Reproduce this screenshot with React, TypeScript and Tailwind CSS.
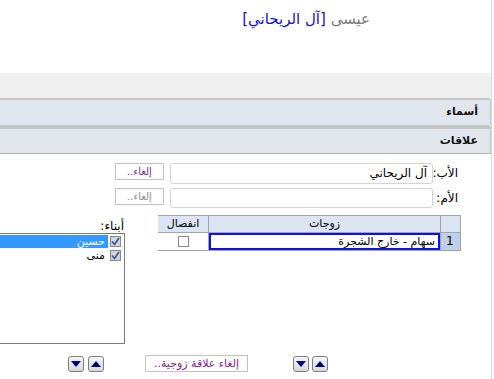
import React from "react";

const font = { fontFamily: '"DejaVu Sans", Tahoma, sans-serif' };

function Arrow({ up }: { up?: boolean }) {
  return (
    <div className="w-[16px] h-[16px] border border-[#7f7f7f] rounded-[3px] bg-gradient-to-b from-[#f6f6f8] to-[#d6d8de] flex items-center justify-center">
      <svg width="10" height="6" viewBox="0 0 10 6">
        {up ? <polygon points="5,0 10,6 0,6" fill="#000080" /> : <polygon points="0,0 10,0 5,6" fill="#000080" />}
      </svg>
    </div>
  );
}

function Check() {
  return (
    <div className="w-[11px] h-[11px] border border-[#8a8a8a] bg-[#cfd3da] flex items-center justify-center shrink-0">
      <svg width="9" height="9" viewBox="0 0 9 9">
        <path d="M1 4.5 L3.5 7.5 L8 1" stroke="#3a4fa0" strokeWidth="1.6" fill="none" />
      </svg>
    </div>
  );
}

export default function App() {
  return (
    <div className="w-[494px] h-[379px] bg-white overflow-hidden" style={font}>
      <div dir="rtl" className="w-[492px] h-[379px] border-r border-[#dcdcdc] flex flex-col">
        {/* title */}
        <div className="h-[73px] pt-[9px] pr-[121px] text-[15px] leading-[20px]">
          <span className="text-[#7a7a7a]">عيسى</span>{" "}
          <span className="text-[#1414cc]">[آل الريحاني]</span>
        </div>
        <div className="h-[25px] bg-[#efefef]" />
        <div className="h-[27px] border-t-2 border-[#c4c4c4] bg-[#e1e5ee] border-r border-r-[#c4c4c4] rounded-tr-[3px] flex items-center pr-[12px] text-[11px] font-bold text-[#111]">
          أسماء
        </div>
        <div className="h-[29px] border-t-4 border-[#c4c4c4] border-b border-b-[#b4b4b4] bg-[#e1e5ee] border-r border-r-[#c4c4c4] rounded-tr-[3px] flex items-center pr-[12px] text-[11px] font-bold text-[#111]">
          علاقات
        </div>

        {/* form */}
        <div className="pt-[9px] pr-[33px] flex flex-col gap-[4px]">
          <div className="flex items-start h-[21px]">
            <div className="w-[25px] text-[12px] leading-[21px] text-black">الأب:</div>
            <div className="w-[263px] h-[21px] border border-[#d4d4d4] rounded-[3px] pr-[5px] text-[12px] leading-[19px] text-black">آل الريحاني</div>
            <div className="mr-[6px] w-[49px] h-[17px] border border-[#c4c4c4] text-[10px] leading-[15px] text-center text-[#8a1a9a]">إلغاء..</div>
          </div>
          <div className="flex items-start h-[20px]">
            <div className="w-[25px] text-[12px] leading-[20px] text-black">الأم:</div>
            <div className="w-[263px] h-[20px] border border-[#d4d4d4] rounded-[3px]" />
            <div className="mr-[6px] w-[49px] h-[17px] border border-[#c4c4c4] text-[10px] leading-[15px] text-center text-[#8c8c8c]">إلغاء..</div>
          </div>
        </div>

        {/* table + children list */}
        <div className="mt-[5px] pr-[30px] flex items-start gap-[33px]">
          <div className="mt-[2px] w-[303px] bg-[#a4a4a4] p-px grid grid-cols-[19px_231px_50px] gap-px">
            <div className="h-[16px] bg-[#dbe4f3]" />
            <div className="h-[16px] bg-[#dbe4f3] text-[11px] leading-[16px] text-center text-black">زوجات</div>
            <div className="h-[16px] bg-[#dbe4f3] text-[11px] leading-[16px] text-center text-black">انفصال</div>
            <div className="h-[17px] bg-[#bdcfe9] text-[12px] leading-[17px] text-left pl-[5px]">1</div>
            <div className="h-[17px] bg-white border-2 border-[#1010e0] pr-[3px] text-[11px] leading-[13px] text-black">سهام - خارج الشجرة</div>
            <div className="h-[17px] bg-white flex items-center justify-center">
              <div className="w-[11px] h-[11px] border border-[#8a8a8a] bg-white" />
            </div>
          </div>
          <div className="w-[125px] flex flex-col">
            <div className="h-[20px] pr-[1px] text-[12px] leading-[26px] text-black">أبناء:</div>
            <div className="h-[111px] border-t border-r border-b border-[#7c7c7c] pt-[1px] flex flex-col gap-[1px]">
              <div className="flex items-center h-[13px] pr-[3px]">
                <Check />
                <div className="mr-[2px] flex-1 h-[13px] bg-[#3399ff] text-white text-[11px] leading-[13px] pr-[3px]">حسين</div>
              </div>
              <div className="flex items-center h-[13px] pr-[3px]">
                <Check />
                <div className="mr-[2px] flex-1 h-[13px] text-black text-[11px] leading-[13px] pr-[3px]">منى</div>
              </div>
            </div>
          </div>
        </div>

        {/* bottom buttons */}
        <div className="mt-[11px] pr-[163px] flex items-center h-[17px]">
          <Arrow up />
          <div className="mr-[3px]"><Arrow /></div>
          <div className="mr-[45px] w-[103px] h-[17px] border border-[#c4c4c4] text-[11px] leading-[15px] text-center text-[#8a1a9a]">إلغاء علاقة زوجية..</div>
          <div className="mr-[41px]"><Arrow up /></div>
          <div className="mr-[4px]"><Arrow /></div>
        </div>
      </div>
    </div>
  );
}
